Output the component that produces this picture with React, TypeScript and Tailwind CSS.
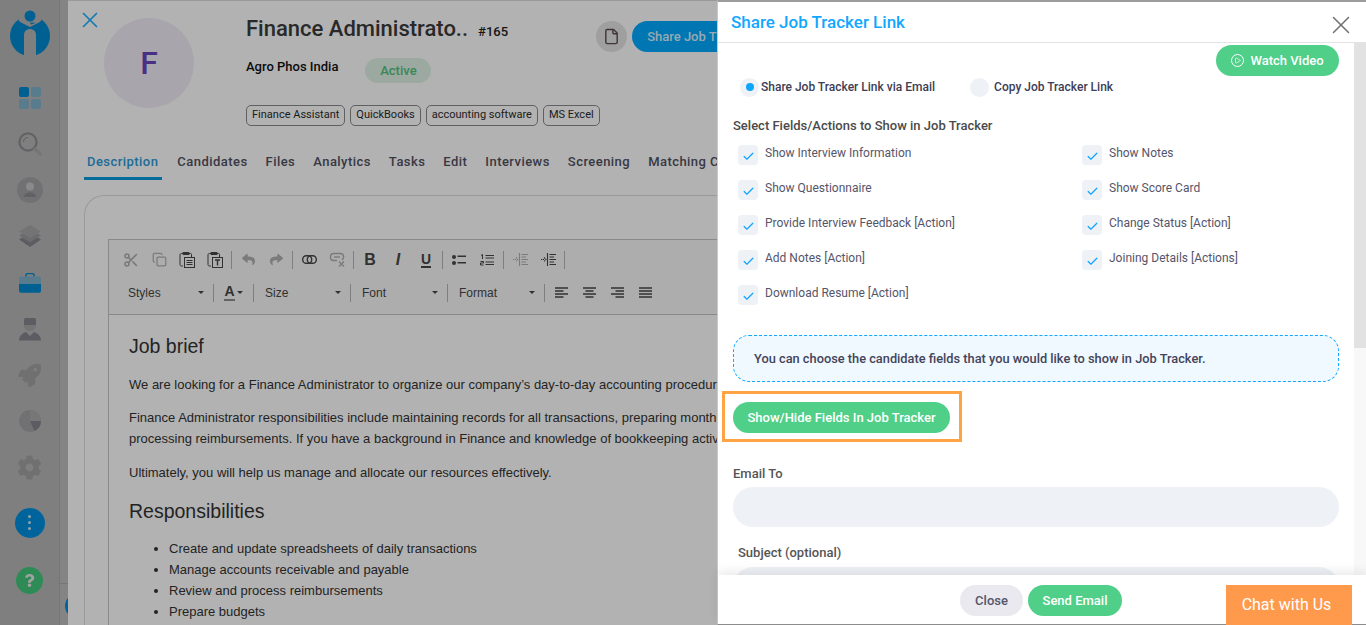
import type React from "react";
import { Check, Copy, File, Play, Scissors, X } from "lucide-react";
import { FaCog, FaQuestion, FaReply, FaRocket, FaShare } from "react-icons/fa";

const Logo = () => (
  <svg width="40" height="46" viewBox="0 0 40 46">
    <circle cx="20" cy="26" r="20" fill="#008ad0" />
    <path d="M9 6.5C7 9 9 12 13 13.5L20 17 27 13.5C31 12 33 9 31 6.5L31 0H9Z" fill="#b7b7b7" />
    <circle cx="20" cy="6" r="5.5" fill="#008ad0" />
    <path d="M20 12.5L26 12.8 21 14.5Z" fill="#008ad0" />
    <path d="M14 46V25C14 17 26 17 26 25V46Z" fill="#b7b7b7" />
  </svg>
);

const GridIcon = () => (
  <div className="grid h-[22px] w-[22px] grid-cols-2 gap-[2px]">
    <div className="rounded-[2px] bg-[#008ad0]" />
    <div className="rounded-[2px] bg-[#7fb0cb]" />
    <div className="rounded-[2px] bg-[#7fb0cb]" />
    <div className="rounded-[2px] bg-[#7fb0cb]" />
  </div>
);

const SearchIcon = () => (
  <svg width="24" height="24" viewBox="0 0 24 24" fill="none">
    <circle cx="10" cy="10" r="8.6" stroke="#8d8d93" strokeWidth="2.2" />
    <path d="M5.5 10A4.5 4.5 0 0 1 10 5.5" stroke="#8d8d93" strokeWidth="1.2" />
    <path d="M17 17L22 22" stroke="#a8a8a8" strokeWidth="3.4" strokeLinecap="round" />
  </svg>
);

const PersonIcon = () => (
  <div className="flex h-[26px] w-[26px] items-center justify-center rounded-full bg-[#a3a3a5]">
    <svg width="16" height="16" viewBox="0 0 16 16">
      <circle cx="8" cy="4.6" r="4" fill="#c6c6c6" />
      <path d="M2 15C2 9 14 9 14 15Z" fill="#8b8b90" />
    </svg>
  </div>
);

const LayersIcon = () => (
  <svg width="22" height="23" viewBox="0 0 22 23">
    <path d="M11 8L22 14.5 11 22 0 14.5Z" fill="#85858c" />
    <path d="M11 4L22 10.5 11 17.5 0 10.5Z" fill="#9b9b9e" />
    <path d="M11 0L22 6.5 11 13 0 6.5Z" fill="#a6a6a8" />
  </svg>
);

const BriefcaseIcon = () => (
  <svg width="22" height="20" viewBox="0 0 22 20">
    <path d="M7 4V2C7 1 8 .5 9 .5H13C14 .5 15 1 15 2V4" fill="none" stroke="#008ad0" strokeWidth="1.4" />
    <path d="M0 5.5C0 4 1 3.5 2 3.5H20C21 3.5 22 4 22 5.5V11H0Z" fill="#7fb0cb" />
    <path d="M0 11H22V17.5C22 19 21 19.7 20 19.7H2C1 19.7 0 19 0 17.5Z" fill="#008ad0" />
  </svg>
);

const AgentIcon = () => (
  <svg width="22" height="23" viewBox="0 0 22 23">
    <path d="M5 2C5 .5 6 0 7 0H15C16 0 17 .5 17 2V7H5Z" fill="#85858d" />
    <path d="M5 7H17C17 11 14 13 11 13S5 11 5 7Z" fill="#a6a6a8" />
    <path d="M0 22.5C0 18 3 15.5 7 14L11 18 15 14C19 15.5 22 18 22 22.5Z" fill="#85858d" />
  </svg>
);

const PieIcon = () => (
  <svg width="22" height="22" viewBox="0 0 22 22">
    <circle cx="11" cy="11" r="11" fill="#a3a3a5" />
    <path d="M11 0A11 11 0 0 1 22 11H11Z" fill="#ababad" />
    <path d="M11 11H22A11 11 0 0 1 15.5 21Z" fill="#85858d" />
  </svg>
);

const navItems: { key: string; node: React.ReactNode }[] = [
  { key: "grid", node: <GridIcon /> },
  { key: "search", node: <SearchIcon /> },
  { key: "person", node: <PersonIcon /> },
  { key: "layers", node: <LayersIcon /> },
  { key: "job", node: <BriefcaseIcon /> },
  { key: "agent", node: <AgentIcon /> },
  { key: "rocket", node: <FaRocket size={23} color="#a1a1a3" /> },
  { key: "pie", node: <PieIcon /> },
  { key: "gear", node: <FaCog size={25} color="#a1a1a3" /> },
];

const Sidebar = () => (
  <div className="flex h-full w-[60px] shrink-0 flex-col items-center border-r border-[#a9a9a9] bg-[#b7b7b7] pt-[10px]">
    <Logo />
    <div className="mt-[19px] flex flex-col">
      {navItems.map((item) => (
        <div key={item.key} className="flex h-[46.2px] w-[30px] items-center justify-center">
          {item.node}
        </div>
      ))}
    </div>
    <div className="mt-[17px] flex h-[30px] w-[30px] items-center justify-center rounded-full bg-[#0090e0]">
      <div className="flex flex-col gap-[2.5px]">
        <div className="h-[3.5px] w-[3.5px] rounded-full bg-white/80" />
        <div className="h-[3.5px] w-[3.5px] rounded-full bg-white/80" />
        <div className="h-[3.5px] w-[3.5px] rounded-full bg-white/80" />
      </div>
    </div>
    <div className="mt-[29px] flex h-[27px] w-[27px] items-center justify-center rounded-full bg-[#42c77c]">
      <FaQuestion size={13} color="#e8e8e8" />
    </div>
  </div>
);

// editor toolbar glyphs, CKEditor style
const PasteIcon = ({ kind }: { kind: "lines" | "text" }) => (
  <svg width="16" height="17" viewBox="0 0 16 17" fill="none" stroke="currentColor">
    <path d="M5 2.5H2.5C1.5 2.5 1 3 1 4V13.5C1 14.5 1.5 15 2.5 15H4" />
    <path d="M10 2.5H11.5C12.5 2.5 12.5 3 12.5 4V6" />
    <rect x="3.5" y="1" width="7" height="3" fill="currentColor" stroke="none" rx="1" />
    <rect x="5.5" y="6.5" width="10" height="10" />
    {kind === "lines" ? (
      <path d="M7.5 9.5H13.5M7.5 11.5H13.5M7.5 13.5H13.5" />
    ) : (
      <path d="M8 9H13M10.5 9V14.5" strokeWidth="1.4" />
    )}
  </svg>
);

const LinkIcon = () => (
  <svg width="15" height="9" viewBox="0 0 15 9" fill="none" stroke="currentColor" strokeWidth="1.4">
    <rect x=".7" y=".7" width="9" height="7.6" rx="3.6" />
    <rect x="5.3" y=".7" width="9" height="7.6" rx="3.6" />
  </svg>
);

const UnlinkIcon = () => (
  <svg width="16" height="15" viewBox="0 0 16 15" fill="none" stroke="currentColor" strokeWidth="1.4">
    <path d="M8 8.5H4.5C.5 8.5 .5 1.5 4.5 1.5H11.5C15 1.5 15.5 6 13 8" />
    <path d="M5 5H11" />
    <path d="M10 9.5L15 14.5M15 9.5L10 14.5" strokeWidth="1.5" />
  </svg>
);

const BoldIcon = () => <span className="text-[16px] leading-none font-bold">B</span>;
const ItalicIcon = () => <span className="text-[16px] leading-none font-bold italic">I</span>;
const UnderlineIcon = () => <span className="border-b-2 border-current text-[14px] leading-[14px] font-bold">U</span>;

const BulletIcon = () => (
  <svg width="14" height="12" viewBox="0 0 14 12" fill="currentColor">
    <circle cx="2" cy="3" r="2" />
    <circle cx="2" cy="9" r="2" />
    <rect x="5.5" y="1.5" width="8.5" height="1.5" />
    <rect x="5.5" y="8" width="8.5" height="1.5" />
  </svg>
);

const NumberIcon = () => (
  <svg width="14" height="12" viewBox="0 0 14 12" fill="none" stroke="currentColor">
    <path d="M1 1.5L2.5 .5V5" />
    <path d="M.5 7.5H3.5V9H.5V11H3.5" />
    <path d="M5.5 1.5H14M5.5 4H14M5.5 8H14M5.5 10.5H14" strokeWidth="1.2" />
  </svg>
);

const IndentIcon = () => (
  <svg width="15" height="13" viewBox="0 0 15 13" fill="none" stroke="currentColor" strokeWidth="1.1">
    <path d="M0 6.5H3M3 4.5L5 6.5 3 8.5" strokeDasharray="1.4 .6" />
    <path d="M6.5 0V13" />
    <path d="M8.5 1.5H15M8.5 4H13M8.5 6.5H15M8.5 9H13M8.5 11.5H15" />
  </svg>
);

const AlignIcon = ({ lines }: { lines: string }) => (
  <svg width="13" height="11" viewBox="0 0 13 11" fill="none" stroke="currentColor" strokeWidth="1.6">
    <path d={lines} />
  </svg>
);

const tags = ["Finance Assistant", "QuickBooks", "accounting software", "MS Excel"];
const tabs = ["Description", "Candidates", "Files", "Analytics", "Tasks", "Edit", "Interviews", "Screening", "Matching Candidates"];

const ToolBtn = ({ children, muted }: { children: React.ReactNode; muted?: boolean }) => (
  <div className={`flex h-[24px] w-[28px] items-center justify-center ${muted ? "text-[#b0b0b0]" : "text-[#474747]"}`}>
    {children}
  </div>
);

const Sep = () => <div className="mx-[2px] h-[18px] w-px bg-[#b6b6b6]" />;

const Combo = ({ label, className }: { label: string; className: string }) => (
  <div className={`flex items-center justify-between pr-[7px] text-[12px] text-[#474747] ${className}`}>
    <span>{label}</span>
    <span className="h-0 w-0 border-x-[3px] border-t-[3px] border-x-transparent border-t-[#474747]" />
  </div>
);

const Editor = () => (
  <div className="ml-[23px] mt-[43px] h-[500px] w-[800px] border border-[#c4c4c4] font-['Liberation_Sans',sans-serif]">
    <div className="h-[75px] border-b border-[#c4c4c4] bg-[#f8f8f8] pl-[8px] pt-[8px]">
      <div className="flex h-[24px] items-center">
        <ToolBtn muted><Scissors size={16} strokeWidth={2.4} /></ToolBtn>
        <ToolBtn muted><Copy size={15} /></ToolBtn>
        <ToolBtn><PasteIcon kind="lines" /></ToolBtn>
        <ToolBtn><PasteIcon kind="text" /></ToolBtn>
        <Sep />
        <ToolBtn muted><FaReply size={13} /></ToolBtn>
        <ToolBtn muted><FaShare size={13} /></ToolBtn>
        <Sep />
        <ToolBtn><LinkIcon /></ToolBtn>
        <ToolBtn muted><UnlinkIcon /></ToolBtn>
        <Sep />
        <ToolBtn><BoldIcon /></ToolBtn>
        <ToolBtn><ItalicIcon /></ToolBtn>
        <ToolBtn><UnderlineIcon /></ToolBtn>
        <Sep />
        <ToolBtn><BulletIcon /></ToolBtn>
        <ToolBtn><NumberIcon /></ToolBtn>
        <Sep />
        <ToolBtn muted><IndentIcon /></ToolBtn>
        <ToolBtn><IndentIcon /></ToolBtn>
        <Sep />
      </div>
      <div className="mt-[9px] flex h-[24px] items-center">
        <Combo label="Styles" className="w-[94px] pl-[11px]" />
        <Sep />
        <div className="flex w-[35px] items-center justify-center gap-[2px]">
          <span className="border-b-2 border-[#8f8f8f] text-[14px] leading-[15px] font-bold text-[#474747]">A</span>
          <span className="h-0 w-0 border-x-[3px] border-t-[3px] border-x-transparent border-t-[#474747]" />
        </div>
        <Sep />
        <Combo label="Size" className="w-[92px] pl-[9px]" />
        <Sep />
        <Combo label="Font" className="w-[92px] pl-[9px]" />
        <Sep />
        <Combo label="Format" className="w-[92px] pl-[9px]" />
        <Sep />
        <ToolBtn><AlignIcon lines="M0 1H13M0 4H8.5M0 7H13M0 10H8.5" /></ToolBtn>
        <ToolBtn><AlignIcon lines="M0 1H13M2.5 4H10.5M0 7H13M2.5 10H10.5" /></ToolBtn>
        <ToolBtn><AlignIcon lines="M0 1H13M4.5 4H13M0 7H13M4.5 10H13" /></ToolBtn>
        <ToolBtn><AlignIcon lines="M0 1H13M0 4H13M0 7H13M0 10H13" /></ToolBtn>
      </div>
    </div>
    <div className="whitespace-nowrap bg-white pl-[20px] pt-[19px] text-[13px] leading-[21px] text-[#333]">
      <h3 className="text-[19.5px] leading-[24px]">Job brief</h3>
      <p className="mt-[16px]">We are looking for a Finance Administrator to organize our company’s day-to-day accounting procedures and financial records.</p>
      <p className="mt-[12px]">Finance Administrator responsibilities include maintaining records for all transactions, preparing monthly reports and</p>
      <p>processing reimbursements. If you have a background in Finance and knowledge of bookkeeping activities, we’d like to meet you.</p>
      <p className="mt-[13px]">Ultimately, you will help us manage and allocate our resources effectively.</p>
      <h3 className="mt-[16.5px] text-[19.5px] leading-[24px]">Responsibilities</h3>
      <ul className="mt-[14.5px] list-disc pl-[40px]">
        <li>Create and update spreadsheets of daily transactions</li>
        <li>Manage accounts receivable and payable</li>
        <li>Review and process reimbursements</li>
        <li>Prepare budgets</li>
      </ul>
    </div>
  </div>
);

const JobPage = () => (
  <div className="relative h-full w-[657px] shrink-0 overflow-hidden">
    <div className="flex h-full">
      <div className="relative w-[8px] shrink-0 bg-[#bebebe]">
        <div className="absolute left-0 right-0 top-[583px] h-px bg-[#a9a9a9]" />
        <div className="absolute left-[5px] top-[594px] h-[24px] w-[24px] rounded-full bg-[#0090e0]" />
      </div>
      <div className="relative min-w-0 flex-1 overflow-hidden border-t border-[#dcdcdc] bg-white font-[Roboto,sans-serif]">
        {/* close icon over the header */}
        <X size={26} strokeWidth={1.6} className="absolute left-[9px] top-[6px] text-[#20b0ff]" />
        <div className="flex pl-[36px] pt-[17px]">
          <div className="flex h-[90px] w-[90px] shrink-0 items-center justify-center rounded-full bg-[#f1eef7] text-[32px] font-medium text-[#6a46bd]">
            F
          </div>
          <div className="ml-[52px] min-w-0 flex-1">
            <div className="flex h-[35px] items-start">
              <div className="flex items-center whitespace-nowrap">
                <span className="text-[22px] leading-[22px] font-medium text-[#3b3b3b]">Finance Administrato..</span>
                <span className="ml-[10px] mt-[6px] text-[13px] leading-[16px] font-medium text-[#222]">#165</span>
              </div>
              <div className="ml-[88px] mt-[3px] flex shrink-0 items-center">
                <div className="flex h-[31px] w-[31px] items-center justify-center rounded-full bg-[#e4e4e4] text-[#5d4b4b]">
                  <File size={17} />
                </div>
                <div className="ml-[5px] flex h-[31px] w-[120px] items-center whitespace-nowrap rounded-l-full bg-[#00aaff] pl-[15px] text-[13px] font-medium text-[#d9f2ff]">
                  Share Job Tracker
                </div>
              </div>
            </div>
            <div className="mt-[5px] flex items-center">
              <span className="-mt-[7px] text-[13px] font-medium text-[#111]">Agro Phos India</span>
              <span className="ml-[27px] flex h-[25px] w-[66px] items-center justify-center rounded-full bg-[#dff3e6] text-[13px] font-medium text-[#52c27f]">
                Active
              </span>
            </div>
            <div className="mt-[22px] flex gap-[5px]">
              {tags.map((t) => (
                <span key={t} className="flex h-[21px] items-center rounded-[5px] border border-[#8a8a8a] px-[5px] text-[11px] text-[#2b2b2b]">
                  {t}
                </span>
              ))}
            </div>
          </div>
        </div>
        <div className="ml-[19px] mt-[26px] flex gap-[18px] whitespace-nowrap text-[13px] font-medium tracking-[0.45px] text-[#515162]">
          {tabs.map((t, i) => (
            <div key={t} className={i === 0 ? "-mx-[3px] border-b-[3px] border-[#0a9bde] pl-[3px] pr-[4px] pb-[5px] text-[#2b9ad8]" : "pb-[5px]"}>
              {t}
            </div>
          ))}
        </div>
        <div className="ml-[16px] mt-[15px] w-[900px] rounded-tl-[20px] border-l border-t border-[#dcdcdc]">
          <Editor />
        </div>
      </div>
    </div>
  </div>
);

const checkLeft = ["Show Interview Information", "Show Questionnaire", "Provide Interview Feedback [Action]", "Add Notes [Action]", "Download Resume [Action]"];
const checkRight = ["Show Notes", "Show Score Card", "Change Status [Action]", "Joining Details [Actions]"];

const CheckRow = ({ label }: { label: string }) => (
  <div className="flex h-[35px] items-start">
    <div className="mt-[2px] flex h-[20px] w-[20px] items-center justify-center rounded-[4px] bg-[#eef1f5] pt-[3px] text-[#0ea5ff]">
      <Check size={13} strokeWidth={2.2} />
    </div>
    <span className="ml-[7px] mt-[2px] text-[12px] leading-[16px] text-[#55556a]">{label}</span>
  </div>
);

const SharePanel = () => (
  <div className="relative flex h-full w-[649px] shrink-0 flex-col border-l border-[#c9c9c9] border-t-2 border-t-[#9c9c9c] border-b-[1px] border-b-[#8e8e8e] bg-white font-[Roboto,sans-serif]">
    <div className="flex h-[41px] shrink-0 items-start justify-between border-b border-[#e3e3e3] pl-[13px] pr-[10px]">
      <h2 className="pt-[10px] text-[17px] leading-[20px] font-medium text-[#11a7ff]">Share Job Tracker Link</h2>
      <X size={30} strokeWidth={1.2} className="mt-[8px] text-[#707070]" />
    </div>
    <div className="flex min-h-0 flex-1">
      <div className="min-w-0 flex-1 overflow-hidden pl-[15px] pr-[15px]">
        <div className="flex justify-end pt-[2px]">
          <div className="flex h-[31px] w-[123px] items-center justify-center gap-[6px] rounded-full bg-[#50cf89] text-[13px] font-medium text-white">
            <span className="flex h-[13px] w-[13px] items-center justify-center rounded-full border-[1.5px] border-white">
              <Play size={7} strokeWidth={2.4} />
            </span>
            Watch Video
          </div>
        </div>
        <div className="mt-[1px] flex h-[20px] items-center text-[12px] font-medium text-[#3d3d55]">
          <div className="ml-[7px] flex h-[19px] w-[19px] items-center justify-center rounded-full bg-[#eef1f5]">
            <div className="h-[8px] w-[8px] rounded-full bg-[#0ea5ff]" />
          </div>
          <span className="ml-[2px]">Share Job Tracker Link via Email</span>
          <div className="ml-[35px] h-[19px] w-[19px] rounded-full bg-[#eef1f5]" />
          <span className="ml-[5px]">Copy Job Tracker Link</span>
        </div>
        <div className="mt-[21px] text-[13px] leading-[16px] font-medium text-[#4a4a4a]">Select Fields/Actions to Show in Job Tracker</div>
        <div className="ml-[5px] mt-[9px] grid h-[175px] grid-cols-[344px_1fr]">
          <div>
            {checkLeft.map((l) => (
              <CheckRow key={l} label={l} />
            ))}
          </div>
          <div>
            {checkRight.map((l) => (
              <CheckRow key={l} label={l} />
            ))}
          </div>
        </div>
        <div className="mt-[17px] flex h-[47px] w-[606px] items-center rounded-[16px] border border-dashed border-[#11a7ff] bg-[#f0f9ff] pl-[20px] text-[12.8px] font-medium text-[#44445a]">
          You can choose the candidate fields that you would like to show in Job Tracker.
        </div>
        <div className="-ml-[11px] mt-[9px] w-[240px] border-[3px] border-[#ffa445] pb-[6px] pl-[8px] pt-[8px]">
          <div className="flex h-[31px] w-[217px] items-center justify-center rounded-full bg-[#50cf89] text-[13px] font-medium whitespace-nowrap text-white">
            Show/Hide Fields In Job Tracker
          </div>
        </div>
        <div className="mt-[24px] text-[13px] leading-[16px] font-medium text-[#555]">Email To</div>
        <div className="mt-[5px] h-[40px] w-[606px] rounded-full bg-[#eef1f5]" />
        <div className="ml-[5px] mt-[18px] text-[13px] leading-[16px] font-medium text-[#555]">Subject (optional)</div>
        <div className="mt-[6px] h-[40px] w-[606px] rounded-full bg-[#eef1f5]" />
      </div>
      <div className="w-[12px] shrink-0 bg-[#f8f8f8]">
        <div className="h-[305px] bg-[#e2e2e2]" />
      </div>
    </div>
    <div className="relative flex h-[49px] shrink-0 justify-center gap-[5px] bg-white pr-[2px] pt-[10px] shadow-[0_-4px_10px_rgba(0,0,0,0.08)]">
      <div className="flex h-[31px] w-[63px] items-center justify-center rounded-full bg-[#e9e9ef] text-[13px] font-medium text-[#55556a]">Close</div>
      <div className="flex h-[31px] w-[94px] items-center justify-center rounded-full bg-[#50cf89] text-[13px] font-medium text-white">Send Email</div>
      {/* chat launcher sits on top of the footer */}
      <div className="absolute bottom-[-1px] right-[14px] flex h-[40px] w-[126px] items-center justify-center bg-[#ff9a4d] pr-[5px] text-[16px] text-white">
        Chat with Us
      </div>
    </div>
  </div>
);

export default function App() {
  return (
    <div className="flex h-[625px] w-[1366px] overflow-hidden bg-white">
      <div className="relative flex h-full w-[717px] shrink-0">
        <Sidebar />
        <JobPage />
        {/* modal backdrop */}
        <div className="absolute inset-0 bg-black/30" />
      </div>
      <SharePanel />
    </div>
  );
}
